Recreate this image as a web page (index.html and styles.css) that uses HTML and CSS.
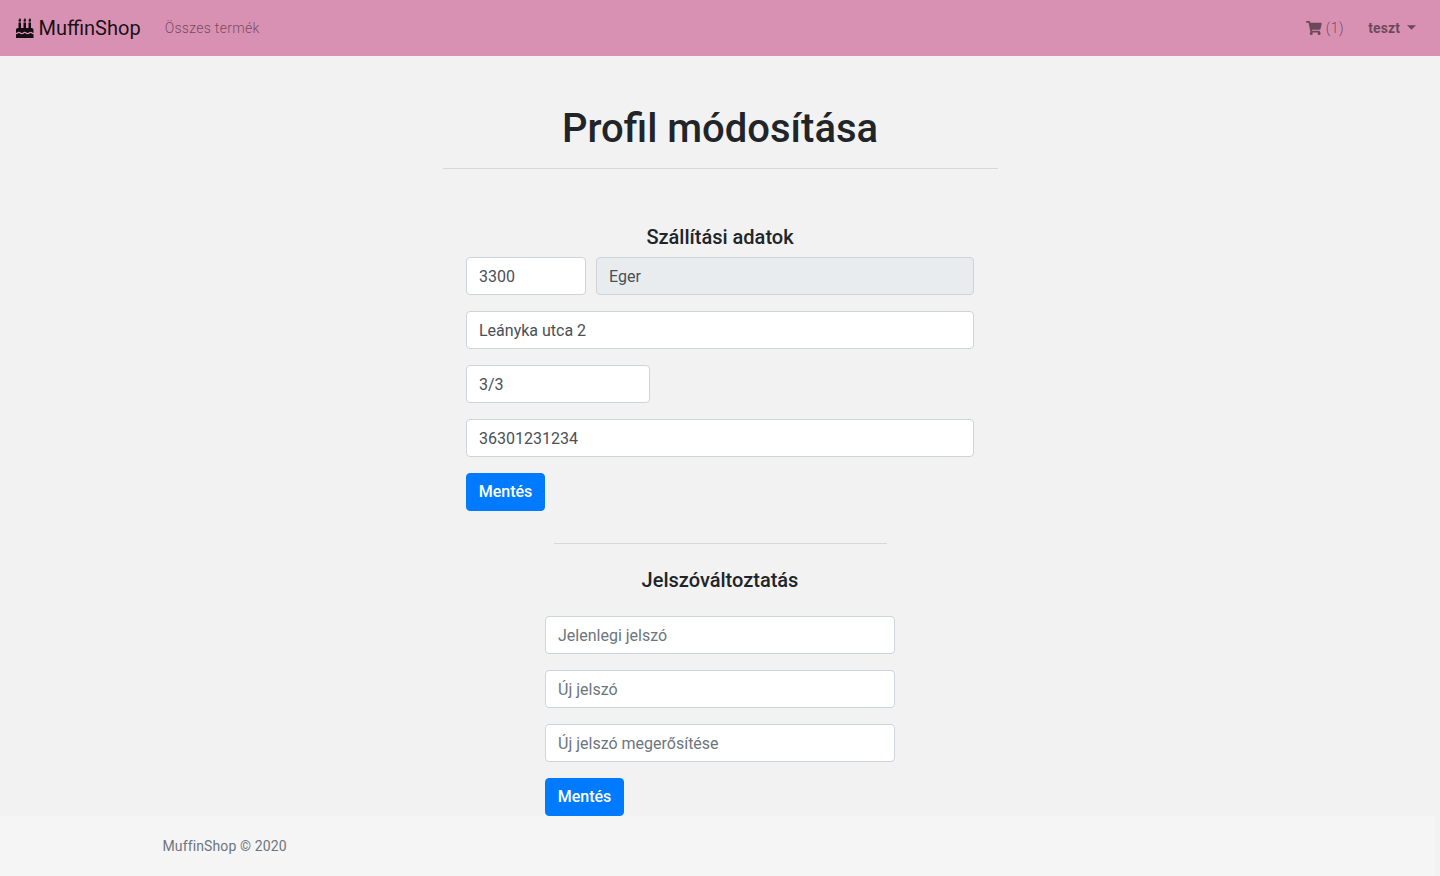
FILE: index.html
```html
<!DOCTYPE html>
<html lang="hu">
<head>
<meta charset="utf-8">
<title>MuffinShop</title>
<link rel="stylesheet" href="styles.css">
</head>
<body>
<nav class="navbar">
  <a class="brand"><svg class="cake" viewBox="0 0 448 512"><path fill="currentColor" d="M448 384c-28.02 0-31.26-32-74.5-32-43.43 0-46.825 32-74.75 32-27.695 0-31.454-32-74.75-32-42.842 0-47.218 32-74.5 32-28.148 0-31.202-32-74.75-32-43.547 0-46.653 32-74.75 32v-80c0-26.5 21.5-48 48-48h16V112h64v144h64V112h64v144h64V112h64v144h16c26.5 0 48 21.5 48 48v80zm0 128H0v-96c43.356 0 46.767-32 74.75-32 27.951 0 31.253 32 74.75 32 42.843 0 47.217-32 74.5-32 28.148 0 31.201 32 74.75 32 43.357 0 46.767-32 74.75-32 27.488 0 31.252 32 74.5 32v96zM96 96c-17.75 0-32-14.25-32-32 0-31 32-23 32-64 12 0 32 29.5 32 56s-14.25 40-32 40zm128 0c-17.75 0-32-14.25-32-32 0-31 32-23 32-64 12 0 32 29.5 32 56s-14.25 40-32 40zm128 0c-17.75 0-32-14.25-32-32 0-31 32-23 32-64 12 0 32 29.5 32 56s-14.25 40-32 40z"/></svg><span>MuffinShop</span></a>
  <a class="nav-link">Összes termék</a>
  <div class="nav-right">
    <a class="nav-link cart-link"><svg class="cart" viewBox="0 0 576 512"><path fill="currentColor" d="M528.12 301.319l47.273-208C578.806 78.301 567.391 64 551.99 64H159.208l-9.166-44.81C147.758 8.021 137.93 0 126.529 0H24C10.745 0 0 10.745 0 24v16c0 13.255 10.745 24 24 24h69.883l70.248 343.435C147.325 417.1 136 435.222 136 456c0 30.928 25.072 56 56 56s56-25.072 56-56c0-15.674-6.447-29.835-16.824-40h209.647C430.447 426.165 424 440.326 424 456c0 30.928 25.072 56 56 56s56-25.072 56-56c0-22.172-12.888-41.332-31.579-50.405l5.517-24.276c3.413-15.018-8.002-29.319-23.403-29.319H218.117l-6.545-32h293.145c11.206 0 20.92-7.754 23.403-18.681z"/></svg><span>(1)</span></a>
    <a class="nav-link user">teszt<i class="caret"></i></a>
  </div>
</nav>
<main class="content">
  <h1>Profil módosítása</h1>
  <hr class="rule rule-wide">
  <form class="address">
    <h5>Szállítási adatok</h5>
    <div class="row">
      <input class="control zip" type="text" value="3300">
      <input class="control city" type="text" value="Eger" readonly>
    </div>
    <input class="control" type="text" value="Leányka utca 2">
    <input class="control door" type="text" value="3/3">
    <input class="control" type="text" value="36301231234">
    <button class="btn" type="button">Mentés</button>
  </form>
  <hr class="rule rule-narrow">
  <h5 class="password-title">Jelszóváltoztatás</h5>
  <form class="password">
    <input class="control" type="password" placeholder="Jelenlegi jelszó">
    <input class="control" type="password" placeholder="Új jelszó">
    <input class="control" type="password" placeholder="Új jelszó megerősítése">
    <button class="btn" type="button">Mentés</button>
  </form>
</main>
<footer class="footer"><span>MuffinShop © 2020</span></footer>
</body>
</html>
```
FILE: styles.css
```css
*, *::before, *::after { box-sizing: border-box; }
body {
  margin: 0;
  min-height: 876px;
  display: flex;
  flex-direction: column;
  overflow: hidden;
  background: #f2f2f2;
  color: #212529;
  font: 400 16px/1.5 Roboto, sans-serif;
}
.navbar {
  display: flex;
  align-items: center;
  height: 56px;
  padding: 0 16px;
  background: #d891b3;
}
.brand {
  display: flex;
  align-items: center;
  gap: 5px;
  margin-right: 16px;
  font-size: 20px;
  line-height: 30px;
  color: rgba(0, 0, 0, .9);
}
.cake { width: 17.5px; height: 20px; }
.nav-link {
  display: flex;
  align-items: center;
  padding: 0 8px;
  font-size: 14px;
  font-weight: 300;
  letter-spacing: .3px;
  color: rgba(0, 0, 0, .5);
}
.nav-right { display: flex; gap: 8px; margin-left: auto; }
.cart-link { gap: 4px; }
.cart { width: 15.75px; height: 14px; }
.cart-link span { letter-spacing: .5px; }
.user { font-weight: 700; letter-spacing: .1px; }
.caret {
  width: 9px;
  height: 4.5px;
  margin-left: 7px;
  margin-top: -1px;
  background: currentColor;
  clip-path: polygon(0 0, 100% 0, 50% 100%);
}
.content {
  display: flex;
  flex-direction: column;
  align-items: center;
  padding-top: 49px;
}
h1 { margin: 0; font-size: 40px; line-height: 48px; font-weight: 500; }
h5 { margin: 0; font-size: 20px; line-height: 24px; font-weight: 500; text-align: center; }
.rule { margin: 0; border: 0; border-top: 1px solid #d8d8d8; }
.rule-wide { width: 555px; margin-top: 15px; }
.rule-narrow { width: 333px; margin-top: 32px; }
.address {
  display: flex;
  flex-direction: column;
  align-items: flex-start;
  gap: 16px;
  width: 508px;
  margin-top: 56px;
}
.address h5 { width: 100%; margin-bottom: -8px; }
.row { display: flex; gap: 10px; width: 100%; }
.control {
  width: 100%;
  height: 38px;
  padding: 6px 12px;
  border: 1px solid #ced4da;
  border-radius: 4px;
  background: #fff;
  color: #495057;
  font: inherit;
}
.control::placeholder { color: #6c757d; opacity: 1; }
.zip { width: 120px; }
.city { flex: 1; background: #e9ecef; }
.door { width: 184px; }
.btn {
  width: 79px;
  height: 38px;
  padding: 6px 0;
  border: 1px solid #007bff;
  border-radius: 4px;
  background: #007bff;
  color: #fff;
  font: inherit;
  font-weight: 500;
}
.password-title { margin-top: 24px; }
.password {
  display: flex;
  flex-direction: column;
  align-items: flex-start;
  gap: 16px;
  width: 350px;
  margin-top: 24px;
}
.footer {
  display: flex;
  align-items: center;
  width: 1435px;
  height: 60px;
  margin-top: auto;
  padding-left: 162.5px;
  background: #f5f5f5;
  color: #6c757d;
  font-size: 14px;
  letter-spacing: .12px;
}
```
